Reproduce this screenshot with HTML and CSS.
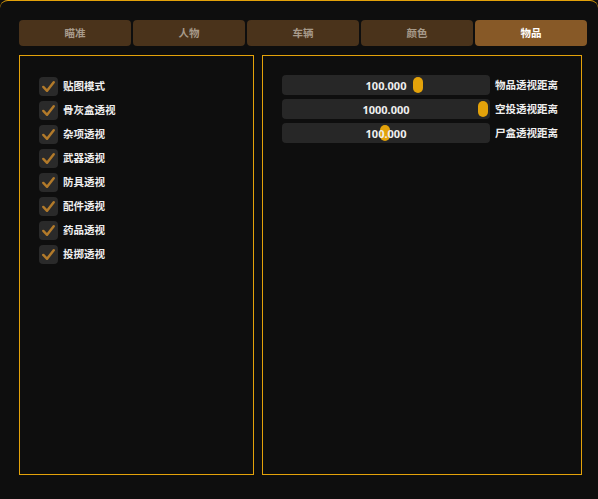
FILE: index.html
```html
<!DOCTYPE html>
<html>
<head>
<meta charset="utf-8">
<link rel="stylesheet" href="styles.css">
</head>
<body>
<div class="window">
  <div class="tabs">
    <div class="tab">瞄准</div>
    <div class="tab">人物</div>
    <div class="tab">车辆</div>
    <div class="tab">颜色</div>
    <div class="tab active">物品</div>
  </div>
  <div class="panels">
    <div class="panel left">
      <div class="check-row"><span class="box"><svg viewBox="0 0 20 20"><path d="M4.5 10.5 L8.5 14.5 L15.5 5.5"/></svg></span><span class="label">贴图模式</span></div>
      <div class="check-row"><span class="box"><svg viewBox="0 0 20 20"><path d="M4.5 10.5 L8.5 14.5 L15.5 5.5"/></svg></span><span class="label">骨灰盒透视</span></div>
      <div class="check-row"><span class="box"><svg viewBox="0 0 20 20"><path d="M4.5 10.5 L8.5 14.5 L15.5 5.5"/></svg></span><span class="label">杂项透视</span></div>
      <div class="check-row"><span class="box"><svg viewBox="0 0 20 20"><path d="M4.5 10.5 L8.5 14.5 L15.5 5.5"/></svg></span><span class="label">武器透视</span></div>
      <div class="check-row"><span class="box"><svg viewBox="0 0 20 20"><path d="M4.5 10.5 L8.5 14.5 L15.5 5.5"/></svg></span><span class="label">防具透视</span></div>
      <div class="check-row"><span class="box"><svg viewBox="0 0 20 20"><path d="M4.5 10.5 L8.5 14.5 L15.5 5.5"/></svg></span><span class="label">配件透视</span></div>
      <div class="check-row"><span class="box"><svg viewBox="0 0 20 20"><path d="M4.5 10.5 L8.5 14.5 L15.5 5.5"/></svg></span><span class="label">药品透视</span></div>
      <div class="check-row"><span class="box"><svg viewBox="0 0 20 20"><path d="M4.5 10.5 L8.5 14.5 L15.5 5.5"/></svg></span><span class="label">投掷透视</span></div>
    </div>
    <div class="panel right">
      <div class="slider-row">
        <div class="slider"><span class="value">100.000</span><span class="grab" style="left:131px"></span></div>
        <span class="label">物品透视距离</span>
      </div>
      <div class="slider-row">
        <div class="slider"><span class="value">1000.000</span><span class="grab" style="left:196px"></span></div>
        <span class="label">空投透视距离</span>
      </div>
      <div class="slider-row">
        <div class="slider"><span class="value">100.000</span><span class="grab" style="left:98px"></span></div>
        <span class="label">尸盒透视距离</span>
      </div>
    </div>
  </div>
</div>
</body>
</html>
```

FILE: styles.css
```css
html, body {
  margin: 0;
  padding: 0;
  background: #0e0e0e;
}
body {
  width: 598px;
  height: 499px;
  overflow: hidden;
  font-family: "Noto Sans", "Noto Sans CJK SC", sans-serif;
  font-weight: 700;
  font-size: 10.5px;
}
.window {
  box-sizing: border-box;
  width: 598px;
  height: 499px;
  background: #0e0e0e;
  border-top: 1px solid #e3a20a;
  border-radius: 8px 8px 0 0;
  padding: 19px 11px 0 19px;
}
.tabs {
  display: flex;
  gap: 2px;
  height: 26px;
}
.tab {
  flex: 1;
  background: #4a331b;
  color: #a79a8a;
  border-radius: 4px;
  display: flex;
  align-items: center;
  justify-content: center;
  line-height: 1;
}
.tab.active {
  background: #875927;
  color: #ffffff;
}
.panels {
  display: flex;
  gap: 8px;
  margin-top: 9px;
  width: 563px;
}
.panel {
  box-sizing: border-box;
  height: 420px;
  border: 1px solid #e3a20a;
  padding: 19px 19px;
  display: flex;
  flex-direction: column;
  gap: 4px;
}
.panel.left {
  width: 235px;
  padding-top: 20px;
}
.panel.right {
  width: 320px;
}
.check-row {
  display: flex;
  align-items: center;
  height: 20px;
}
.box {
  width: 19px;
  height: 19px;
  border-radius: 4px;
  background: #2a2a2a;
  display: flex;
  align-items: center;
  justify-content: center;
}
.box svg {
  width: 19px;
  height: 19px;
}
.box path {
  fill: none;
  stroke: #b27a2a;
  stroke-width: 2.6;
  stroke-linecap: round;
  stroke-linejoin: round;
}
.label {
  color: #efefef;
  margin-left: 5px;
  line-height: 1;
}
.slider-row {
  display: flex;
  align-items: center;
  height: 20px;
}
.slider {
  position: relative;
  width: 208px;
  height: 20px;
  border-radius: 4px;
  background: #272727;
  display: flex;
  align-items: center;
  justify-content: center;
}
.value {
  position: relative;
  color: #efefef;
  z-index: 2;
  line-height: 1;
  font-size: 11px;
}
.grab {
  position: absolute;
  top: 2px;
  width: 10px;
  height: 16px;
  border-radius: 5px;
  background: #e3a20a;
  z-index: 1;
}
```
